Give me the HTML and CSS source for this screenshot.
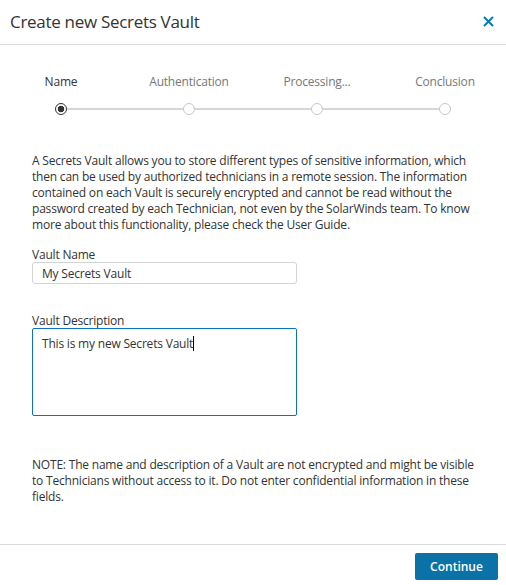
FILE: index.html
```html
<!DOCTYPE html>
<html>
<head>
<meta charset="utf-8">
<link rel="stylesheet" href="styles.css">
</head>
<body>
<div class="dialog">
  <header class="dlg-header">
    <h1 class="dlg-title">Create new Secrets Vault</h1>
    <button class="close-btn" aria-label="Close">
      <svg width="11" height="11" viewBox="0 0 11 11"><path d="M1 1L10 10M10 1L1 10" stroke="#0b78b4" stroke-width="2" fill="none"/></svg>
    </button>
  </header>
  <main class="dlg-body">
    <div class="stepper">
      <div class="step-labels">
        <span class="step-label active">Name</span>
        <span class="step-label">Authentication</span>
        <span class="step-label">Processing...</span>
        <span class="step-label">Conclusion</span>
      </div>
      <div class="step-track">
        <span class="dot active"></span>
        <span class="seg"></span>
        <span class="dot"></span>
        <span class="seg"></span>
        <span class="dot"></span>
        <span class="seg"></span>
        <span class="dot"></span>
      </div>
    </div>
    <p class="intro">A Secrets Vault allows you to store different types of sensitive information, which then can be used by authorized technicians in a remote session. The information contained on each Vault is securely encrypted and cannot be read without the password created by each Technician, not even by the SolarWinds team. To know more about this functionality, please check the User Guide.</p>
    <label class="field-label">Vault Name</label>
    <div class="input">My Secrets Vault</div>
    <label class="field-label desc-label">Vault Description</label>
    <div class="textarea">This is my new Secrets Vault<span class="caret"></span></div>
    <p class="note">NOTE: The name and description of a Vault are not encrypted and might be visible to Technicians without access to it. Do not enter confidential information in these fields.</p>
  </main>
  <footer class="dlg-footer">
    <button class="primary-btn">Continue</button>
  </footer>
</div>
</body>
</html>
```
FILE: styles.css
```css
* { box-sizing: border-box; }
html, body { margin: 0; padding: 0; height: 100%; background: #fff; }
body {
  font-family: "Open Sans", "Noto Sans", sans-serif;
  color: #333;
  font-size: 12px;
  line-height: 16px;
  letter-spacing: -0.2px;
}
.dialog {
  display: flex;
  flex-direction: column;
  height: 585px;
  overflow: hidden;
}
.dlg-header {
  height: 45px;
  border-bottom: 1px solid #dcdcdc;
  display: flex;
  align-items: center;
  justify-content: space-between;
  padding: 0 12px 1px 10px;
  flex-shrink: 0;
}
.dlg-title {
  margin: 0;
  font-size: 17px;
  font-weight: 400;
  color: #333;
  line-height: 22px;
  letter-spacing: -0.3px;
}
.close-btn {
  border: 0;
  background: none;
  padding: 0;
  width: 11px;
  height: 11px;
  display: flex;
}
.dlg-body {
  flex: 1;
  padding: 29px 32px 0 32px;
}
.stepper { margin: 0; }
.step-labels {
  display: grid;
  grid-template-columns: repeat(4, 128px);
  margin-left: -35px;
  width: 512px;
}
.step-label {
  text-align: center;
  color: #777;
  font-size: 12px;
  line-height: 16px;
}
.step-label.active { color: #333; }
.step-track {
  display: flex;
  align-items: center;
  margin: 13px 0 0 23px;
  width: 396px;
}
.dot {
  width: 12px;
  height: 12px;
  border-radius: 50%;
  border: 1px solid #c8c8c8;
  background: #fff;
  flex-shrink: 0;
}
.dot.active {
  border: 1.5px solid #333;
  background: radial-gradient(circle, #333 0, #333 3px, #fff 3.6px);
}
.seg {
  flex: 1;
  height: 2px;
  background: #d6d6d6;
}
.intro {
  margin: 38px 0 0 0;
  width: 442px;
}
.field-label {
  display: block;
  margin-top: 14px;
}
.desc-label { margin-top: 29px; }
.input {
  margin-top: -1px;
  width: 265px;
  height: 22px;
  border: 1px solid #d3d3d3;
  border-radius: 3px;
  padding: 2px 9px;
  line-height: 17px;
}
.textarea {
  margin-top: -1px;
  width: 265px;
  height: 88px;
  border: 1px solid #0a72c0;
  border-radius: 2px;
  padding: 6px 9px;
  line-height: 17px;
}
.caret {
  display: inline-block;
  width: 1px;
  height: 15px;
  background: #000;
  vertical-align: -3px;
}
.note {
  margin: 41px 0 0 0;
  width: 442px;
}
.dlg-footer {
  flex-shrink: 0;
  border-top: 1px solid #dcdcdc;
  padding: 8px 8px 5px 8px;
  display: flex;
  justify-content: flex-end;
}
.primary-btn {
  width: 83px;
  height: 27px;
  border: 0;
  border-radius: 2px;
  background: #0b72a8;
  color: #fff;
  font-family: "Open Sans", "Noto Sans", sans-serif;
  font-size: 12px;
  font-weight: 600;
  letter-spacing: 0;
  padding: 0;
}
```
